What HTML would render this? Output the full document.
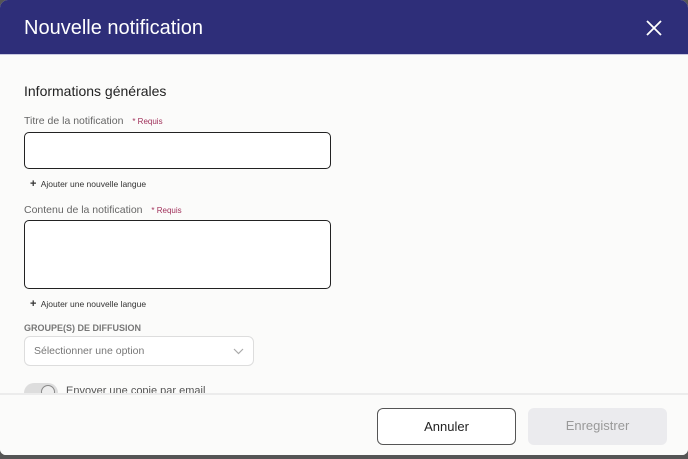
<!DOCTYPE html>
<html><head><meta charset="utf-8"><style>
*{margin:0;padding:0;box-sizing:border-box}
body{width:688px;height:459px;background:#555;font-family:"Liberation Sans",sans-serif;overflow:hidden;position:relative}
.modal{position:absolute;left:0;top:0;width:688px;height:455px;background:#fbfbfa;border-radius:8px 8px 6px 6px;overflow:hidden}
.hdr{position:absolute;left:0;top:0;width:688px;height:55px;background:#2e2e79;border-bottom:1px solid #c8c8e0}
.hdr h1{position:absolute;left:24px;top:17px;color:#fff;font-weight:normal;font-size:20px;letter-spacing:0px}
.x{position:absolute;left:645px;top:19px}
.t{position:absolute;white-space:nowrap}
.inp{position:absolute;left:24px;width:307px;border:1px solid #222;border-radius:5px;background:#fff}
.req{color:#a0305a;font-size:8px;margin-left:6px}
.lbl{color:#666;font-size:10.5px}
.add{color:#333;font-size:8.5px;left:30px}
.sel{position:absolute;left:24px;top:336px;width:230px;height:30px;border:1px solid #ddd;border-radius:6px;background:#fff}
.foot{position:absolute;left:0;top:393px;width:688px;height:62px;background:#fbfbfa;border-top:2px solid #ececec}
.btn{position:absolute;top:13px;width:139px;height:37px;border-radius:6px;font-size:13px;text-align:center;line-height:36px}
</style></head><body>
<div class="modal">
<div class="hdr"><h1>Nouvelle notification</h1>
<svg class="x" width="18" height="18" viewBox="0 0 18 18"><path d="M2 2L16 16M16 2L2 16" stroke="#fff" stroke-width="1.8"/></svg></div>
<div class="t" style="left:24px;top:83px;font-size:14px;color:#222">Informations générales</div>
<div class="t lbl" style="left:24px;top:115px">Titre de la notification <span class="req">* Requis</span></div>
<div class="inp" style="top:132px;height:37px"></div>
<div class="t add" style="top:178px"><b style="font-size:11px">+</b>&nbsp; Ajouter une nouvelle langue</div>
<div class="t lbl" style="left:24px;top:204px">Contenu de la notification <span class="req">* Requis</span></div>
<div class="inp" style="top:220px;height:69px"></div>
<div class="t add" style="top:298px"><b style="font-size:11px">+</b>&nbsp; Ajouter une nouvelle langue</div>
<div class="t" style="left:24px;top:323px;font-size:9px;font-weight:bold;color:#777">GROUPE(S) DE DIFFUSION</div>
<div class="sel"><span class="t" style="left:9px;top:8px;font-size:10.5px;color:#777">Sélectionner une option</span>
<svg style="position:absolute;left:208px;top:11px" width="11" height="7" viewBox="0 0 11 7"><path d="M1 1L5.5 5.5L10 1" stroke="#aaa" fill="none" stroke-width="1.2"/></svg></div>
<div style="position:absolute;left:24px;top:383px;width:34px;height:20px;border-radius:10px;background:#ddd"></div>
<div style="position:absolute;left:41px;top:385px;width:14px;height:14px;border-radius:50%;border:1.5px solid #888;background:#eee"></div>
<div class="t" style="left:66px;top:385px;font-size:11px;color:#555">Envoyer une copie par email</div>
<div class="foot">
<div class="btn" style="left:377px;border:1px solid #555;background:#fff;color:#222">Annuler</div>
<div class="btn" style="left:528px;background:#ebebee;color:#999">Enregistrer</div>
</div>
</div>
</body></html>
